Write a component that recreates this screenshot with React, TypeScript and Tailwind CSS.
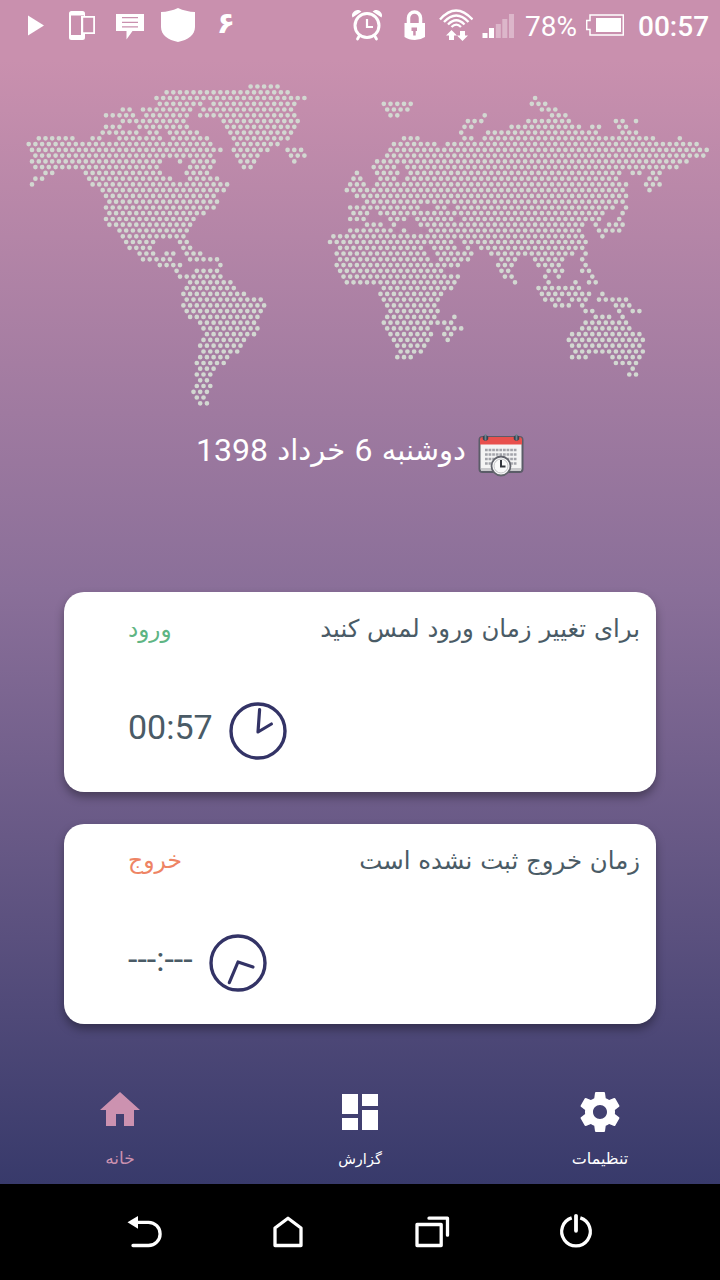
import React from "react";
import { MdDashboard } from "react-icons/md";

const MAP_ROWS: string[] = [
  "66-74",
  "41-77",
  "38-82 150",
  "39-51 55-79 105-113 149-153",
  "28-30 34-48 52-78 106-112 152-156",
  "23-31 35-47 51-79 107-109 135 155-159",
  "28-46 58-80 130-134 148-160 174-176 180",
  "23-27 33-47 59-79 129-131 143-163 167-169 175-177",
  "22-32 36-38 42-50 60-78 128 136-168 176-180",
  "3-13 19-21 27-39 43-53 61-77 111-115 129-131 135-185 193",
  "0-54 62-74 108-120 124-198",
  "1-57 61-71 77-81 107-201",
  "2-54 62-68 78-82 106-200",
  "1-39 45 49-55 63-67 79 103-195",
  "2-38 48-54 64-66 102-108 112-192",
  "5-7 17-39 47-53 97 103-109 113-175 179-181 185-187",
  "2-4 18-42 48-56 96-98 104-108 112-174 184-186",
  "1 19-59 95-99 103-177 183-187",
  "22-58 94-176 184",
  "23-55 97-177",
  "24-56 100-176",
  "23-55 95-115 121-123 127-173 177",
  "24-52 96-100 104-170 176",
  "23-49 95-99 107-111 115-125 129-169 175",
  "24-48 100-104 108 116-164 168 172-176",
  "27-47 95-107 111 119-163 169-175",
  "28-46 90-164 170",
  "29-37 45-47 89-125 129-165",
  "30-36 46-48 92-116 120-126 130 134-164",
  "33-37 41-43 47-51 91-117 121-131 137-161 165",
  "34-42 48-56 92-118 122-130 140-144 150-158 164",
  "39-45 57 91-127 139-143 151-157 165",
  "44 50-56 92-122 140-142 154-158 164-166",
  "45-57 93-127 141-143 153 157 167",
  "48-60 94-126 144 154 162 166-168",
  "47-61 105-125 151-163",
  "46-64 104-122 152-166 170",
  "47-69 105-121 153-157 161-165 169-177",
  "46-70 106-120 156-160 164 174-178",
  "47-69 107-121 165-167 175 179-181",
  "48-68 106-120 126 168-172 176",
  "51-67 105-125 165-177",
  "52-68 106-118 124-128 164-178",
  "53-67 107-119 123-125 161-181",
  "52-64 108-118 124 160-182",
  "51-63 109-117 161-181",
  "52-62 110-116 162-182",
  "51-59 109-113 161-165 173-181",
  "50-58 174-180",
  "51-55 179",
  "50-54 178-180",
  "51-53",
  "50-54",
  "49-53",
  "50-52",
  "51-53",
];

const mapPath = MAP_ROWS.map((row, n) =>
  row
    .split(" ")
    .map((run) => {
      const [a, b = a] = run.split("-").map(Number);
      let d = "";
      for (let h = a; h <= b; h += 2) {
        const x = (h > 86 ? 30.7 : 28.67) + h * 3.363;
        d += `M${x.toFixed(1)} ${(6.5 + n * 5.76).toFixed(1)}h.01`;
      }
      return d;
    })
    .join("")
).join("");

function WorldMap() {
  return (
    <svg className="block h-[330px] w-full" viewBox="0 0 720 330" fill="none">
      <path d={mapPath} stroke="#d2d8d1" strokeWidth="4.7" strokeLinecap="round" />
    </svg>
  );
}

function StatusBar() {
  return (
    <header className="flex h-[50px] items-center text-white">
      <svg className="ml-7 h-[50px] w-4" viewBox="28 0 16 50" fill="currentColor">
        <path d="M28 15.500 44 25.500 28 35.500z" />
      </svg>
      <svg className="ml-[25px] h-[50px] w-[26px]" viewBox="69 0 26 50" fill="none">
        <path fillRule="evenodd" fill="currentColor" d="M71.500 11h11a2.500 2.500 0 0 1 2.500 2.500V16H95v18H85v3.500a2.500 2.500 0 0 1-2.500 2.500h-11a2.500 2.500 0 0 1-2.500-2.500v-24a2.500 2.500 0 0 1 2.500-2.500zM71 15.500v19.500h10V16h3v-.5zM83.200 17.800v14.400h10V17.800z" />
      </svg>
      <svg className="ml-[21px] h-[50px] w-7" viewBox="116 0 28 50">
        <path fill="currentColor" d="M116 14h28v17h-11.500l-6 8.500V31H116z" />
        <path stroke="#c990ae" strokeWidth="1.300" d="M122 17.700h16M122 22.300h16M122 26.900h16" />
      </svg>
      <svg className="ml-[17px] h-[50px] w-[34px]" viewBox="161 0 34 50" fill="currentColor">
        <path d="M178 8q8 3.700 17 4v15c0 8-7 13-17 15-10-2-17-7-17-15V12q9-.3 17-4z" />
      </svg>
      <span className="ml-[22px] flex h-[50px] w-[18px] items-center justify-center pb-1 font-['DejaVu_Sans'] text-[30px] font-bold leading-none">۶</span>
      <svg className="ml-[117px] h-[50px] w-[30px]" viewBox="352 0 30 50" fill="none" stroke="currentColor">
        <circle cx="367" cy="25.500" r="12" strokeWidth="3" />
        <path strokeWidth="2.200" d="M367 19v8h6" />
        <path strokeWidth="2.800" strokeLinecap="round" d="m359.500 35.500-2 3.500M374.500 35.500l2 3.500" />
        <path fill="currentColor" stroke="none" d="M352.500 17.500c-2-4 2-8 6.500-7.500l2.500 1.500zM381.500 17.500c2-4-2-8-6.500-7.500l-2.500 1.500z" />
      </svg>
      <svg className="ml-[22px] h-[50px] w-[22px]" viewBox="404 0 22 50">
        <path fill="none" stroke="currentColor" strokeWidth="3.500" d="M408.500 24v-6a6 6 0 0 1 12 0v6" />
        <path fill="currentColor" d="M404.500 23h20.500v14q-4.500 3-10.200 3-6 0-10.300-3z" />
        <path fill="#c990ae" d="M411.500 27.500h5.500v3.500h-1.300v4.500h-2.500V31h-1.700z" />
      </svg>
      <svg className="ml-[13px] h-[50px] w-[34px]" viewBox="439 0 34 50" fill="none" stroke="currentColor">
        <path strokeWidth="2.300" d="M440 19.500q16-18 32.500 0M444 22q12.300-13 24.500 0M448 24.500q8.300-8.500 16.500 0M451.500 27q4.800-4.800 9.500 0" />
        <path fill="currentColor" stroke="none" d="m451.500 30 5.500 5.500h-3V40h-5v-4.500h-3zM462.500 41l5.500-5.500h-3V31h-5v4.500h-3z" />
      </svg>
      <svg className="ml-[9px] h-[50px] w-8" viewBox="482 0 32 50" fill="currentColor">
        <path d="M482.500 33h5v5h-5zM489 28h5v10h-5z" />
        <path opacity=".35" d="M495.800 24h5v14h-5zM502.300 19h5v19h-5zM509 14h5v24h-5z" />
      </svg>
      <span className="ml-[11px] w-[54px] whitespace-nowrap pt-[3px] font-['Roboto'] text-[28px] leading-none">78%</span>
      <svg className="ml-[7px] h-[50px] w-[38px]" viewBox="586 0 38 50">
        <path fill="none" stroke="currentColor" strokeWidth="1.500" d="M590 15h33.300v20H590v-5.500h-3.300V20.500h3.300z" />
        <path fill="currentColor" d="M596 18h25v14h-25z" />
      </svg>
      <span className="ml-[14px] whitespace-nowrap pt-[3px] font-['Roboto'] text-[28px] font-medium leading-none">00:57</span>
    </header>
  );
}

function CalendarIcon() {
  return (
    <svg className="block h-[46px] w-[46px]" viewBox="0 0 46 46">
      <rect x="1.500" y="4" width="43" height="35" rx="3" fill="#f4f4f4" stroke="#5b5c68" strokeWidth="2" />
      <path d="M2 11.500V7q0-3 3-3h36q3 0 3 3v4.500z" fill="#e8504d" />
      <g stroke="#a3a4aa" strokeWidth="2.700" strokeDasharray="2.700 .9">
        <path d="M7 17h32M7 21.500h32M7 26h32M7 30.500h32" />
      </g>
      <path d="M3 35h40v3H3z" fill="#c9c9cc" />
      <circle cx="7.500" cy="5" r="2.800" fill="#39434f" />
      <circle cx="38.500" cy="5" r="2.800" fill="#39434f" />
      <path d="M7.500 2v4.500M38.500 2v4.500" stroke="#6c8390" strokeWidth="1.800" strokeLinecap="round" />
      <circle cx="23" cy="33" r="9.500" fill="#fafafa" stroke="#63656d" strokeWidth="1.800" />
      <circle cx="23" cy="33" r="7" fill="none" stroke="#c5c5c8" strokeWidth="1" />
      <path d="M23 27v6.500h4.500" fill="none" stroke="#33363d" strokeWidth="2" />
    </svg>
  );
}

function Clock({ hands }: { hands: string }) {
  return (
    <svg className="h-[58px] w-[58px] shrink-0" viewBox="-29 -29 58 58" fill="none" stroke="#333366">
      <circle r="27" strokeWidth="3.400" />
      <path d={hands} strokeWidth="3.200" strokeLinecap="round" strokeLinejoin="round" />
    </svg>
  );
}

interface CardProps {
  title: string;
  label: string;
  labelClass: string;
  time: string;
  hands: string;
}

function TimeCard({ title, label, labelClass, time, hands }: CardProps) {
  return (
    <section className="flex h-[200px] flex-col rounded-[20px] bg-white pl-16 pr-4 shadow-[0_5px_10px_rgba(0,0,0,0.35)]">
      <div className="flex h-[74px] items-center justify-between whitespace-nowrap font-['DejaVu_Sans']">
        <span dir="rtl" className={labelClass}>{label}</span>
        <span dir="rtl" className="text-[24.4px] text-[#4a5b66]">{title}</span>
      </div>
      <div className="mt-9 flex h-[58px] items-center gap-4">
        <span className="-mt-2 font-['Roboto'] text-[34px] leading-none text-[#4a5b66]">{time}</span>
        <Clock hands={hands} />
      </div>
    </section>
  );
}

function BottomTabs() {
  return (
    <nav className="flex h-28 whitespace-nowrap font-['DejaVu_Sans'] text-white">
      <a className="flex flex-1 flex-col items-center pt-[14px] text-[#cc92b0]">
        <svg className="h-12 w-12" viewBox="0 0 24 24" fill="currentColor">
          <path d="M10 20v-6h4v6h5v-8h3L12 3 2 12h3v8z" />
        </svg>
        <span dir="rtl" className="mt-3 text-[17px] leading-6">خانه</span>
      </a>
      <a className="flex flex-1 flex-col items-center pt-4">
        <MdDashboard className="h-12 w-12" />
        <span dir="rtl" className="mt-[11px] text-[14.5px] leading-6">گزارش</span>
      </a>
      <a className="flex flex-1 flex-col items-center pt-4">
        <svg className="h-12 w-12" viewBox="0 0 24 24" fill="currentColor">
          <path d="M19.430 12.980c.04-.32.07-.64.07-.98s-.03-.66-.07-.98l2.110-1.650c.19-.15.24-.42.12-.64l-2-3.460c-.12-.22-.39-.3-.61-.22l-2.490 1c-.52-.4-1.080-.73-1.690-.98l-.38-2.650C14.460 2.180 14.250 2 14 2h-4c-.25 0-.46.18-.49.42l-.38 2.650c-.61.25-1.170.59-1.690.98l-2.490-1c-.23-.09-.49 0-.61.22l-2 3.460c-.13.22-.07.49.12.64l2.110 1.650c-.04.32-.07.65-.07.98s.03.66.07.98l-2.110 1.650c-.19.15-.24.42-.12.64l2 3.460c.12.22.39.3.61.22l2.490-1c.52.4 1.080.73 1.690.98l.38 2.650c.03.24.24.42.49.42h4c.25 0 .46-.18.49-.42l.38-2.650c.61-.25 1.170-.59 1.690-.98l2.490 1c.23.09.49 0 .61-.22l2-3.460c.12-.22.07-.49-.12-.64l-2.110-1.650zM12 15.500c-1.930 0-3.500-1.570-3.500-3.500s1.570-3.500 3.500-3.500 3.500 1.570 3.500 3.500-1.570 3.500-3.500 3.500z" />
        </svg>
        <span dir="rtl" className="mt-[11px] text-[16px] leading-6">تنظیمات</span>
      </a>
    </nav>
  );
}

function SystemNav() {
  return (
    <footer className="flex h-24 items-center justify-center gap-24 bg-black text-white">
      <svg className="h-12 w-12" viewBox="120 1208 48 48" fill="none" stroke="currentColor" strokeWidth="3.300" strokeLinecap="round">
        <path d="M136 1222.300h12.500a11.500 11.500 0 0 1 0 23.200h-15.500" />
        <path d="m127.500 1222.300 10.500-6.300v12.800z" fill="currentColor" stroke="none" />
      </svg>
      <svg className="h-12 w-12" viewBox="264 1208 48 48" fill="none" stroke="currentColor" strokeWidth="3.300" strokeLinejoin="round">
        <path d="M275 1245.500v-17.500l13-9.800 13 9.800v17.500z" />
      </svg>
      <svg className="h-12 w-12" viewBox="408 1208 48 48" fill="none" stroke="currentColor" strokeWidth="3.300" strokeLinecap="round" strokeLinejoin="round">
        <path d="M417 1224.500h24.200v21H417zM429 1218.200h18.500v17" />
      </svg>
      <svg className="h-12 w-12" viewBox="552 1208 48 48" fill="none" stroke="currentColor" strokeWidth="3.300">
        <path d="M571.700 1217.900a14.300 14.300 0 1 0 8.600 0" />
        <path d="M576 1215.800v15" strokeWidth="3.800" strokeLinecap="round" />
      </svg>
    </footer>
  );
}

export default function App() {
  return (
    <div className="flex h-[1280px] w-[720px] flex-col overflow-hidden bg-black">
      <div className="flex h-[1184px] flex-col bg-[linear-gradient(to_bottom,#c990ae_0px,#c990ae_60px,#8a6f99_590px,#383a6b_1184px)]">
        <StatusBar />
        <div className="pt-[30px]">
          <WorldMap />
        </div>
        <div className="flex h-[92px] items-center pb-1 pl-[196px]">
          <div dir="rtl" className="-mt-2 flex w-[270px] items-center justify-between whitespace-nowrap font-['Roboto','DejaVu_Sans'] text-[32px] leading-none text-white">
            <span className="text-[29px]">دوشنبه</span>
            <span>6</span>
            <span className="text-[29px]">خرداد</span>
            <span>1398</span>
          </div>
          <div className="ml-3 pt-1">
            <CalendarIcon />
          </div>
        </div>
        <main className="mt-[90px] flex flex-col gap-8 px-16">
          <TimeCard
            title="برای تغییر زمان ورود لمس کنید"
            label="ورود"
            labelClass="text-[23px] text-[#5fb584]"
            time="00:57"
            hands="M1.600-21.300 0 1 13.400-7"
          />
          <TimeCard
            title="زمان خروج ثبت نشده است"
            label="خروج"
            labelClass="text-[23.500px] text-[#ee8464]"
            time="---:---"
            hands="M-8.700 19.700 0-1 15 4"
          />
        </main>
        <div className="mt-12">
          <BottomTabs />
        </div>
      </div>
      <SystemNav />
    </div>
  );
}
